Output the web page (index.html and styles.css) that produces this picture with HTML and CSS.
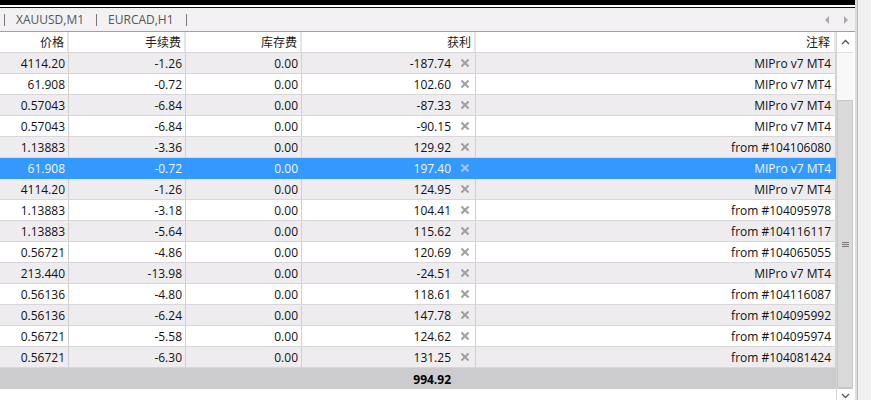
FILE: index.html
```html
<!DOCTYPE html>
<html>
<head>
<meta charset="utf-8">
<link rel="stylesheet" href="styles.css">
</head>
<body>
<div class="window">
  <div class="content">
    <div class="topbar"></div>
    <div class="tabs">
      <span class="sep"></span>
      <span class="tab">XAUUSD,M1</span>
      <span class="sep"></span>
      <span class="tab">EURCAD,H1</span>
      <span class="sep"></span>
      <span class="spacer"></span>
      <span class="arrow left"></span>
      <span class="arrow right"></span>
    </div>
    <div class="grid">
      <div class="table">
        <div class="row head">
          <div class="c">价格</div><div class="c">手续费</div><div class="c">库存费</div><div class="c">获利</div><div class="c last">注释</div>
        </div>
        <div class="row odd"><div class="c">4114.20</div><div class="c">-1.26</div><div class="c">0.00</div><div class="c p"><span>-187.74</span><i class="x"></i></div><div class="c last">MIPro v7 MT4</div></div>
        <div class="row"><div class="c">61.908</div><div class="c">-0.72</div><div class="c">0.00</div><div class="c p"><span>102.60</span><i class="x"></i></div><div class="c last">MIPro v7 MT4</div></div>
        <div class="row odd"><div class="c">0.57043</div><div class="c">-6.84</div><div class="c">0.00</div><div class="c p"><span>-87.33</span><i class="x"></i></div><div class="c last">MIPro v7 MT4</div></div>
        <div class="row"><div class="c">0.57043</div><div class="c">-6.84</div><div class="c">0.00</div><div class="c p"><span>-90.15</span><i class="x"></i></div><div class="c last">MIPro v7 MT4</div></div>
        <div class="row odd"><div class="c">1.13883</div><div class="c">-3.36</div><div class="c">0.00</div><div class="c p"><span>129.92</span><i class="x"></i></div><div class="c last">from #104106080</div></div>
        <div class="row sel"><div class="c">61.908</div><div class="c">-0.72</div><div class="c">0.00</div><div class="c p"><span>197.40</span><i class="x"></i></div><div class="c last">MIPro v7 MT4</div></div>
        <div class="row odd"><div class="c">4114.20</div><div class="c">-1.26</div><div class="c">0.00</div><div class="c p"><span>124.95</span><i class="x"></i></div><div class="c last">MIPro v7 MT4</div></div>
        <div class="row"><div class="c">1.13883</div><div class="c">-3.18</div><div class="c">0.00</div><div class="c p"><span>104.41</span><i class="x"></i></div><div class="c last">from #104095978</div></div>
        <div class="row odd"><div class="c">1.13883</div><div class="c">-5.64</div><div class="c">0.00</div><div class="c p"><span>115.62</span><i class="x"></i></div><div class="c last">from #104116117</div></div>
        <div class="row"><div class="c">0.56721</div><div class="c">-4.86</div><div class="c">0.00</div><div class="c p"><span>120.69</span><i class="x"></i></div><div class="c last">from #104065055</div></div>
        <div class="row odd"><div class="c">213.440</div><div class="c">-13.98</div><div class="c">0.00</div><div class="c p"><span>-24.51</span><i class="x"></i></div><div class="c last">MIPro v7 MT4</div></div>
        <div class="row"><div class="c">0.56136</div><div class="c">-4.80</div><div class="c">0.00</div><div class="c p"><span>118.61</span><i class="x"></i></div><div class="c last">from #104116087</div></div>
        <div class="row odd"><div class="c">0.56136</div><div class="c">-6.24</div><div class="c">0.00</div><div class="c p"><span>147.78</span><i class="x"></i></div><div class="c last">from #104095992</div></div>
        <div class="row"><div class="c">0.56721</div><div class="c">-5.58</div><div class="c">0.00</div><div class="c p"><span>124.62</span><i class="x"></i></div><div class="c last">from #104095974</div></div>
        <div class="row odd"><div class="c">0.56721</div><div class="c">-6.30</div><div class="c">0.00</div><div class="c p"><span>131.25</span><i class="x"></i></div><div class="c last">from #104081424</div></div>
        <div class="row total"><div class="c"></div><div class="c"></div><div class="c"></div><div class="c p"><span>994.92</span><i class="blank"></i></div><div class="c last"></div></div>
      </div>
      <div class="vscroll">
        <div class="sbtn up"><svg width="9" height="6" viewBox="0 0 9 6"><path d="M1 5 L4.5 1.5 L8 5" fill="none" stroke="#555" stroke-width="1.3"/></svg></div>
        <div class="track"></div>
        <div class="thumb"><span class="grip"></span></div>
        <div class="sbtn down"><svg width="9" height="6" viewBox="0 0 9 6"><path d="M1 1 L4.5 4.5 L8 1" fill="none" stroke="#555" stroke-width="1.3"/></svg></div>
      </div>
    </div>
  </div>
  <div class="outer"><div class="outer-line"></div></div>
</div>
</body>
</html>
```
FILE: styles.css
```css
* { box-sizing: border-box; }
html, body { margin: 0; padding: 0; }
body {
  width: 871px; height: 400px; overflow: hidden; background: #fff;
  font-family: "Open Sans", "Noto Sans CJK SC", sans-serif;
  font-size: 12px; color: #111;
}
.window { display: flex; height: 400px; }
.content { width: 855px; display: flex; flex-direction: column; }
.topbar {
  height: 8px; background: #000;
  border-bottom: 1px solid #111;
  box-shadow: inset 0 -2px 0 #fff;
}
.tabs {
  height: 24px; background: #f4f1f4; border-bottom: 1px solid #a0a0a0;
  display: flex; align-items: center; color: #555;
  padding-left: 4px;
}
.sep { width: 1px; height: 12px; background: #777; }
.tab { padding: 0 12px 0 11px; line-height: 22px; }
.spacer { flex: 1; }
.arrow { width: 0; height: 0; border-top: 4px solid transparent; border-bottom: 4px solid transparent; }
.arrow.left { border-right: 4px solid #aaa; margin-right: 15px; }
.arrow.right { border-left: 4px solid #aaa; margin-right: 7px; }
.grid { flex: 1; display: flex; }
.table { width: 836px; }
.row {
  display: grid; grid-template-columns: 69px 117px 116px 174px 1fr;
  height: 21px; border-bottom: 1px solid #d8d6d8; background: #fff;
}
.row.odd { background: #efecef; }
.row.head { background: #fff; border-bottom: 1px solid #d6d6d6; }
.row.head .c { border-right: 2px solid #e6e6e6; color: #222; }
.row.sel { background: #3399ff; border-bottom-color: #3399ff; color: #f2f6ff; }
.row.sel .c { border-right-color: #3399ff; }
.row.total { background: #cccbcd; border-bottom: none; font-weight: bold; color: #000; }
.row.total .c { border-right-color: #cccbcd; }
.c {
  border-right: 1px solid #d0d0d0; text-align: right; padding: 2px 3px 0 0;
  line-height: 18px; white-space: nowrap; overflow: hidden;
}
.c.last { padding-right: 4px; }
.c.p { display: flex; justify-content: flex-end; align-items: center; padding-right: 0; }
.x, .blank { display: block; width: 24px; height: 18px; position: relative; }
.x::before, .x::after {
  content: ""; position: absolute; left: 9px; top: 7px; width: 10px; height: 2px;
  background: #a0a0a0; transform: rotate(45deg);
}
.x::after { transform: rotate(-45deg); }
.row.sel .x::before, .row.sel .x::after { background: #a7c3e6; }
.vscroll { width: 17px; display: flex; flex-direction: column; border-left: 1px solid #d6d6d6; }
.sbtn { height: 21px; display: flex; align-items: center; justify-content: center; background: #fff; border-bottom: 1px solid #e0e0e0; }
.sbtn.down { border-bottom: none; border-top: 1px solid #c8c8c8; height: 12px; align-items: flex-end; padding-bottom: 1px; }
.track { height: 47px; background: #f8f8f8; }
.thumb {
  flex: 1; background: #dadada; border: 1px solid #c8c8c8;
  display: flex; align-items: center; justify-content: center;
}
.grip { width: 7px; height: 5px; border-top: 1px solid #777; border-bottom: 1px solid #777; position: relative; }
.grip::after { content: ""; position: absolute; left: 0; right: 0; top: 1px; height: 1px; background: #777; }
.outer { width: 16px; background: #f0f0f0; display: flex; }
.outer-line { width: 3px; background: #dcdcdc; border-right: 1px solid #bdbdbd; }
```
